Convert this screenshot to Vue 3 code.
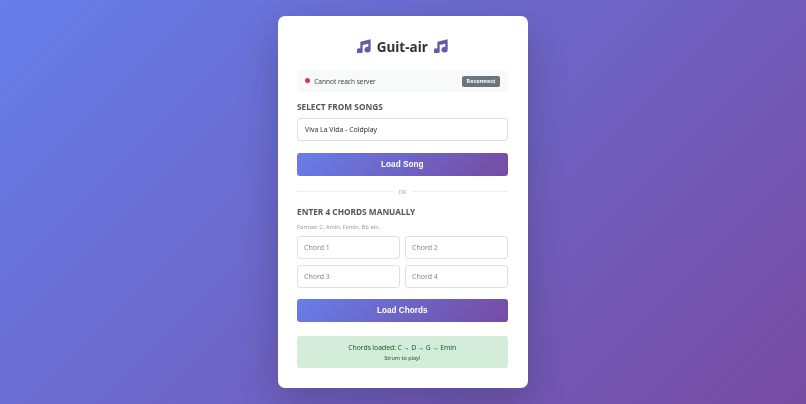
<script setup>
const chords = ['Chord 1', 'Chord 2', 'Chord 3', 'Chord 4']
</script>

<template>
  <div class="page">
    <main class="card">
      <h1 class="title">
        <svg class="note" viewBox="1.5 1.5 21 21"><path d="M6.5 5.5 22 2v15.2a4.7 4.3 0 1 1-3.6-4V8.6L10 10.4v9.2a4.7 4.3 0 1 1-3.5-4z" /></svg>
        <span>Guit-air</span>
        <svg class="note" viewBox="1.5 1.5 21 21"><path d="M6.5 5.5 22 2v15.2a4.7 4.3 0 1 1-3.6-4V8.6L10 10.4v9.2a4.7 4.3 0 1 1-3.5-4z" /></svg>
      </h1>

      <div class="status">
        <div class="status-text"><i class="dot"></i><span>Cannot reach server</span></div>
        <button class="reconnect">Reconnect</button>
      </div>

      <h2 class="label first">Select from songs</h2>
      <div class="field">Viva La Vida - Coldplay</div>
      <button class="action">Load Song</button>

      <div class="divider"><span>OR</span></div>

      <h2 class="label">Enter 4 chords manually</h2>
      <p class="hint">Format: C, Amin, Fsmin, Bb etc.</p>
      <div class="chords">
        <input v-for="c in chords" :key="c" class="chord" :placeholder="c" />
      </div>
      <button class="action">Load Chords</button>

      <div class="result">
        <div class="result-main">Chords loaded: C → D → G → Emin</div>
        <div class="result-sub">Strum to play!</div>
      </div>
    </main>
  </div>
</template>

<style>
html, body { margin: 0; }
</style>

<style scoped>
.page {
  box-sizing: border-box;
  height: 404px;
  display: flex;
  justify-content: center;
  align-items: flex-start;
  padding-top: 16px;
  background: linear-gradient(135deg, #667eea 0%, #764ba2 100%);
  font-family: "Noto Sans", "Open Sans", sans-serif;
  overflow: hidden;
}
.card {
  box-sizing: border-box;
  width: 250px;
  height: 372px;
  padding: 19px 20.5px 0 19px;
  background: #fff;
  border-radius: 7px;
  box-shadow: 0 13px 40px rgba(0, 0, 0, 0.2);
  filter: blur(0.3px);
}
.title {
  margin: 0;
  height: 23px;
  display: flex;
  align-items: center;
  justify-content: center;
  gap: 6px;
  font-size: 13.5px;
  font-weight: 700;
  color: #333;
}
.note { width: 14px; height: 14px; margin-bottom: 1px; fill: #6a5aa5; }
.status {
  box-sizing: border-box;
  margin-top: 12px;
  height: 22px;
  display: flex;
  align-items: center;
  justify-content: space-between;
  padding: 0 7.5px 0 8px;
  background: #f8f9fa;
  border-radius: 4px;
}
.status-text {
  display: flex;
  align-items: center;
  gap: 4px;
  font-size: 6.5px;
  color: #444;
}
.dot {
  width: 5.2px;
  height: 5.2px;
  margin-bottom: 1px;
  border-radius: 50%;
  background: #dc3545;
}
.reconnect {
  box-sizing: border-box;
  width: 38px;
  height: 11px;
  padding: 0;
  border: 0;
  border-radius: 2px;
  background: #6c757d;
  color: #fff;
  font: 700 5.5px "Noto Sans", sans-serif;
}
.label {
  margin: 0;
  font-size: 8.3px;
  line-height: 12px;
  font-weight: 700;
  text-transform: uppercase;
  color: #555;
}
.first { margin-top: 9px; }
.field {
  box-sizing: border-box;
  margin-top: 5px;
  height: 23px;
  padding-left: 7px;
  display: flex;
  align-items: center;
  border: 1.3px solid #e0e0e0;
  border-radius: 3px;
  font-size: 6.9px;
  color: #333;
}
.action {
  display: block;
  box-sizing: border-box;
  width: 100%;
  height: 23px;
  margin-top: 12px;
  padding: 0 0 1px;
  border: 0;
  border-radius: 3px;
  background: linear-gradient(135deg, #667eea 0%, #764ba2 100%);
  color: #fff;
  font: 700 8.2px "Liberation Sans", Arial, sans-serif;
}
.divider {
  margin-top: 11px;
  height: 8px;
  display: flex;
  align-items: center;
  gap: 5.5px;
  font-size: 5.5px;
  color: #aaa;
}
.divider span { padding-top: 1px; }
.divider::before, .divider::after {
  content: "";
  flex: 1;
  height: 1px;
  background: #eee;
}
.divider + .label { margin-top: 11px; }
.hint {
  margin: 5px 0 0;
  font-size: 5.7px;
  line-height: 8px;
  color: #999;
}
.chords {
  margin-top: 5px;
  display: grid;
  grid-template-columns: 1fr 1fr;
  gap: 5.5px;
}
.chord {
  box-sizing: border-box;
  width: 100%;
  min-width: 0;
  height: 23px;
  padding: 0 6px;
  border: 1.3px solid #e0e0e0;
  border-radius: 3px;
  outline: 0;
  font: 7px "Noto Sans", sans-serif;
}
.chord::placeholder { color: #888; }
.chords + .action { margin-top: 11.5px; }
.result {
  box-sizing: border-box;
  height: 32px;
  margin-top: 13.5px;
  padding-top: 6.3px;
  background: #d4edda;
  border-radius: 3px;
  text-align: center;
  color: #155724;
}
.result-main { font-size: 6.8px; line-height: 11px; word-spacing: -0.4px; }
.result-sub { font-size: 5.5px; line-height: 9px; margin-top: 1px; }
</style>
